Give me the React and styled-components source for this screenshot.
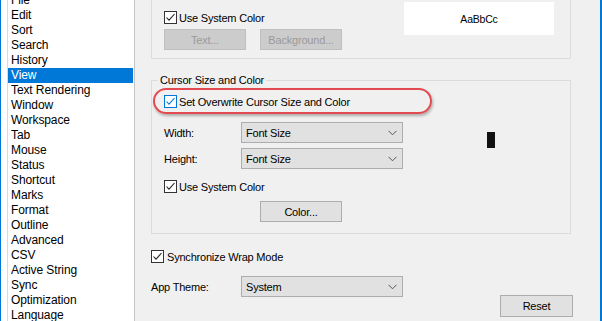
import React from 'react';
import styled, { createGlobalStyle, css } from 'styled-components';

const GlobalStyle = createGlobalStyle`
    html, body {
        margin: 0;
        padding: 0;
        background: #f0f0f0;
    }
    body {
        font-family: "Segoe UI", "Liberation Sans", Arial, sans-serif;
        font-size: 12px;
        color: #000;
        overflow: hidden;
    }
`;

const categories = [
    'File', 'Edit', 'Sort', 'Search', 'History', 'View', 'Text Rendering', 'Window',
    'Workspace', 'Tab', 'Mouse', 'Status', 'Shortcut', 'Marks', 'Format', 'Outline',
    'Advanced', 'CSV', 'Active String', 'Sync', 'Optimization', 'Language'
];

const Check = ({ focused }) => (
    <CheckBox width="13" height="13" viewBox="0 0 13 13">
        <rect x="0.5" y="0.5" width="12" height="12" fill="#fff" stroke={focused ? '#0078d7' : '#333'} />
        <polyline points="2.5,6.5 5,9.2 10.5,3" fill="none" stroke={focused ? '#0078d7' : '#222'} strokeWidth="1.1" />
    </CheckBox>
);

const Chevron = () => (
    <ChevronIcon width="9" height="6" viewBox="0 0 9 6">
        <polyline points="0.5,0.8 4.5,4.8 8.5,0.8" fill="none" stroke="#555" strokeWidth="1" />
    </ChevronIcon>
);

const Select = ({ value }) => (
    <SelectBox>
        <span>{value}</span>
        <Chevron />
    </SelectBox>
);

const App = () => {
    return (
        <>
            <GlobalStyle />
            <Window>
                <Sidebar>
                    <List>
                        {categories.map(name => (
                            <ListItem key={name} selected={name === 'View'}>{name}</ListItem>
                        ))}
                    </List>
                </Sidebar>

                <Pane>
                    <TopGroup>
                        <Column>
                            <CheckRow top>
                                <Check />
                                <span>Use System Color</span>
                            </CheckRow>
                            <ButtonRow>
                                <Button disabled>Text...</Button>
                                <Button disabled>Background...</Button>
                            </ButtonRow>
                        </Column>
                        <Preview>AaBbCc</Preview>
                    </TopGroup>

                    <GroupBox>
                        <Legend>Cursor Size and Color</Legend>
                        <GroupBody>
                            <Column fixed>
                                <CheckRow>
                                    <Check focused />
                                    <span>Set Overwrite Cursor Size and Color</span>
                                    <Highlight />
                                </CheckRow>
                                <FieldRow first>
                                    <Label>Width:</Label>
                                    <Select value="Font Size" />
                                </FieldRow>
                                <FieldRow>
                                    <Label>Height:</Label>
                                    <Select value="Font Size" />
                                </FieldRow>
                                <CheckRow spaced>
                                    <Check />
                                    <span>Use System Color</span>
                                </CheckRow>
                                <ButtonRow color>
                                    <Button>Color...</Button>
                                </ButtonRow>
                            </Column>
                            <CursorBlock />
                        </GroupBody>
                    </GroupBox>

                    <CheckRow sync>
                        <Check />
                        <span>Synchronize Wrap Mode</span>
                    </CheckRow>
                    <FieldRow theme>
                        <Label wide>App Theme:</Label>
                        <Select value="System" />
                    </FieldRow>
                    <Footer>
                        <Button reset>Reset</Button>
                    </Footer>
                </Pane>
            </Window>
        </>
    );
};

const Window = styled.div`
    width: 602px;
    height: 321px;
    box-sizing: border-box;
    display: flex;
    overflow: hidden;
    background: #f0f0f0;
    border-left: 1px solid #0078d7;
    border-right: 2px solid #0078d7;
`;

const Sidebar = styled.div`
    width: 134px;
    flex-shrink: 0;
    box-sizing: border-box;
    background: #fff;
    padding: 0 1px 0 6px;
    border-right: 1px solid #c4c4c4;
`;

const List = styled.div`
    margin-top: -7px;
    border-left: 1px solid #dadada;
    height: 340px;
`;

const ListItem = styled.div`
    height: 15px;
    line-height: 15px;
    padding-left: 3px;
    white-space: nowrap;
    color: #000;
    letter-spacing: -0.1px;

    ${({ selected }) => selected && css`
        background: #0078d7;
        color: #fff;
    `}
`;

const Pane = styled.div`
    flex: 1;
    padding-left: 16px;
    display: flex;
    flex-direction: column;
    align-items: flex-start;
    font-size: 11px;
    letter-spacing: -0.2px;
`;

const TopGroup = styled.div`
    width: 420px;
    height: 59px;
    box-sizing: border-box;
    border: 1px solid #dcdcdc;
    border-top: none;
    padding: 2px 16px 0 12px;
    display: flex;
    justify-content: space-between;
    align-items: flex-start;
`;

const Column = styled.div`
    display: flex;
    flex-direction: column;
    align-items: flex-start;

    ${({ fixed }) => fixed && css`
        width: 239px;
        flex-shrink: 0;
    `}
`;

const CheckRow = styled.div`
    position: relative;
    display: flex;
    align-items: center;
    gap: 2px;
    height: 15px;
    white-space: nowrap;

    ${({ top }) => top && css`
        margin-top: 8px;
    `}
    ${({ spaced }) => spaced && css`
        margin-top: 10px;
    `}
    ${({ sync }) => sync && css`
        margin-top: 15px;
        gap: 3px;
    `}
`;

const CheckBox = styled.svg`
    display: block;
    flex-shrink: 0;
`;

const Highlight = styled.div`
    position: absolute;
    left: -11px;
    top: -6px;
    width: 279px;
    height: 26px;
    box-sizing: border-box;
    border: 2.5px solid #e24a50;
    border-radius: 13px;
    box-shadow: 1px 2px 3px rgba(0, 0, 0, 0.28);
    pointer-events: none;
`;

const ButtonRow = styled.div`
    display: flex;
    gap: 14px;
    margin-top: 4px;

    ${({ color }) => color && css`
        margin-top: 7px;
        padding-left: 96px;
    `}
`;

const Button = styled.div`
    width: 82px;
    height: 21px;
    box-sizing: border-box;
    display: flex;
    align-items: center;
    justify-content: center;
    background: #e1e1e1;
    border: 1px solid #adadad;
    color: #000;

    ${({ disabled }) => disabled && css`
        background: #cccccc;
        border-color: #bfbfbf;
        color: #9a9a9a;
    `}
    ${({ reset }) => reset && css`
        width: 73px;
        height: 22px;
    `}
`;

const Preview = styled.div`
    width: 150px;
    height: 33px;
    background: #fff;
    display: flex;
    align-items: center;
    justify-content: center;
    font-size: 10.5px;
`;

const GroupBox = styled.fieldset`
    width: 420px;
    box-sizing: border-box;
    margin: 14px 0 0 0;
    padding: 6px 12px 11px 12px;
    border: 1px solid #dcdcdc;
    min-width: 0;
`;

const Legend = styled.legend`
    margin-left: -6px;
    padding: 0 2px;
    height: 15px;
    line-height: 15px;
    color: #000;
`;

const GroupBody = styled.div`
    display: flex;
    align-items: flex-start;
`;

const FieldRow = styled.div`
    display: flex;
    align-items: center;
    margin-top: 5px;

    ${({ first }) => first && css`
        margin-top: 13px;
    `}
    ${({ theme }) => theme === true && css`
        margin-top: 12px;
    `}
`;

const Label = styled.div`
    width: 77px;

    ${({ wide }) => wide && css`
        width: 90px;
    `}
`;

const SelectBox = styled.div`
    width: 162px;
    height: 21px;
    box-sizing: border-box;
    display: flex;
    align-items: center;
    justify-content: space-between;
    padding: 0 5px 0 4px;
    background: #e1e1e1;
    border: 1px solid #adadad;
`;

const ChevronIcon = styled.svg`
    display: block;
`;

const CursorBlock = styled.div`
    width: 8px;
    height: 16px;
    background: #111;
    margin: 38px 0 0 84px;
`;

const Footer = styled.div`
    align-self: stretch;
    display: flex;
    justify-content: flex-end;
    padding-right: 27px;
    margin-top: -2px;
`;

export default App;
